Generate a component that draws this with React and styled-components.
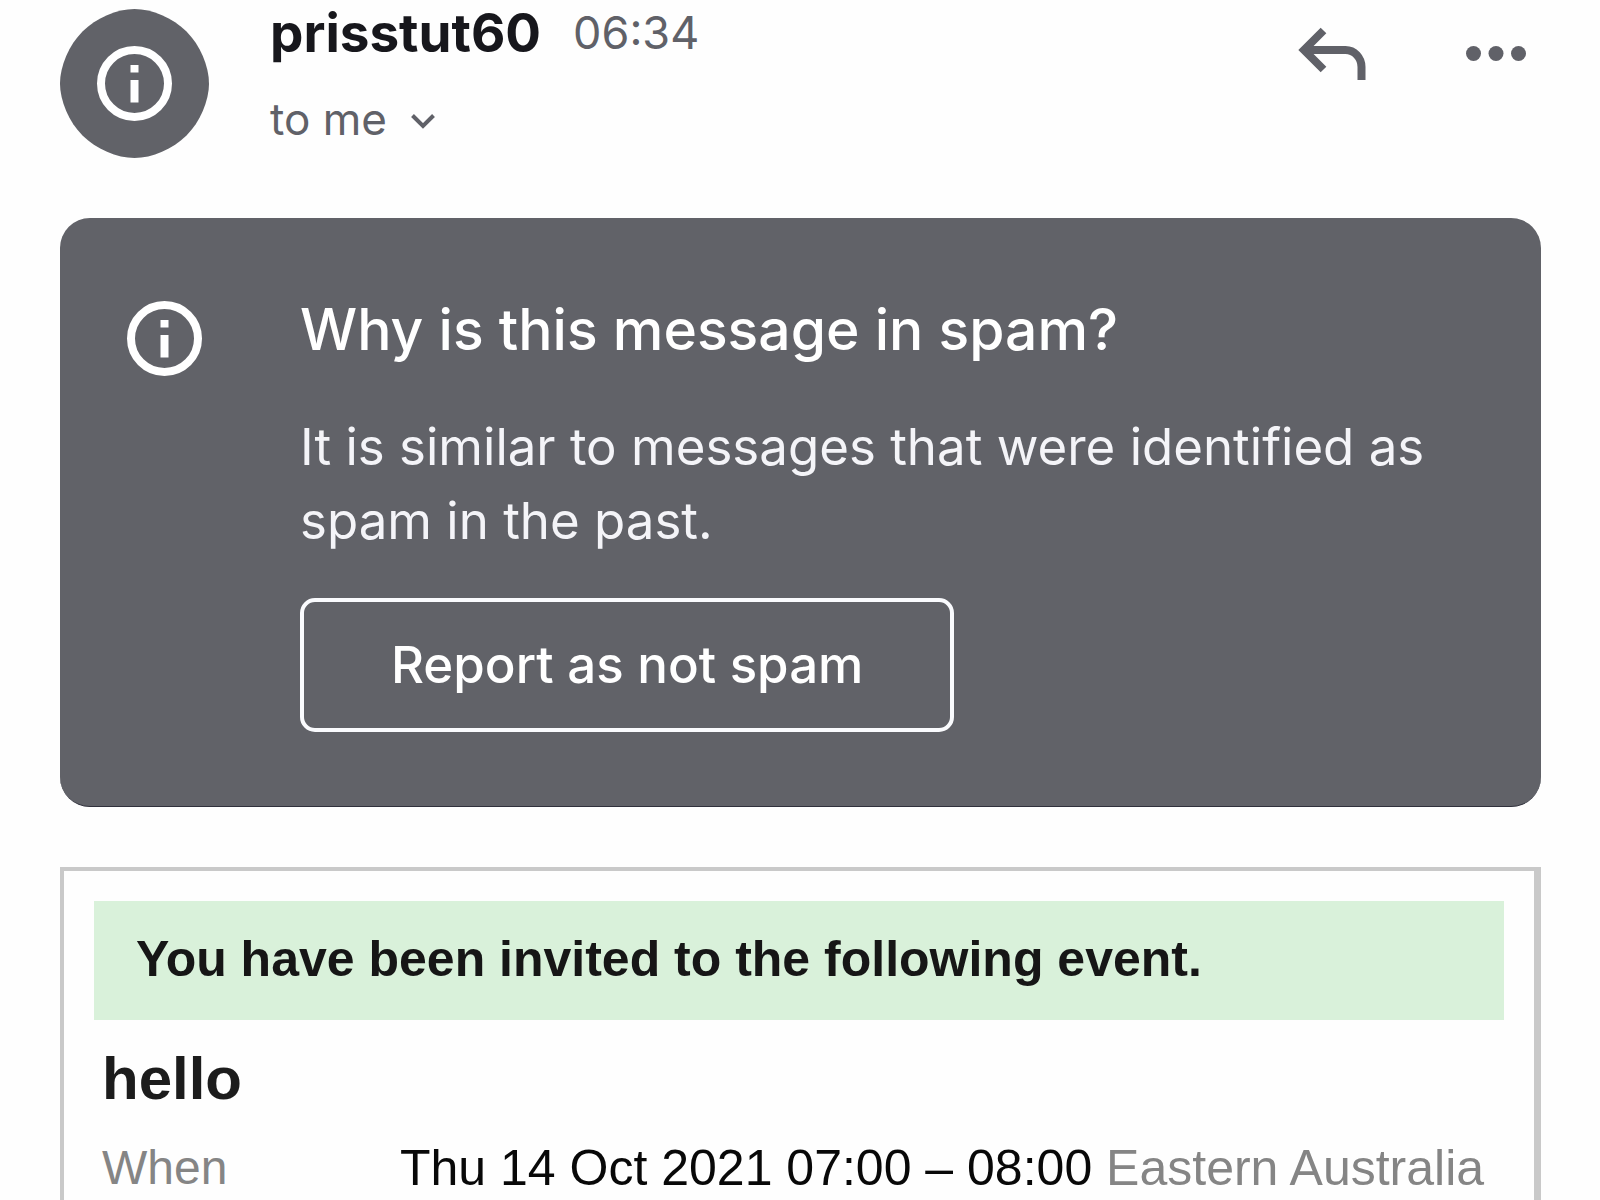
import React from "react";
import styled, { createGlobalStyle } from "styled-components";

const GlobalStyle = createGlobalStyle`
  *, *::before, *::after { box-sizing: border-box; }
  html, body { margin: 0; background: #fefefe; }
  h1, h2, p { margin: 0; }
  button { font: inherit; color: inherit; cursor: pointer; }
`;

const Page = styled.main`
  display: flex;
  flex-direction: column;
  gap: 60px;
  height: 100vh;
  overflow: hidden;
  padding: 9px 59px 0 60px;
  font-family: Inter, "Liberation Sans", sans-serif;
  color: #17171c;
`;

const Header = styled.header`
  display: flex;
  align-items: flex-start;
  flex-shrink: 0;
`;

const Avatar = styled.svg`
  width: 149px;
  height: 149px;
  margin-right: 61px;
  flex-shrink: 0;
`;

const Sender = styled.div`
  display: flex;
  flex-direction: column;
  align-items: flex-start;
  gap: 38px;
  flex: 1;
`;

const SenderLine = styled.div`
  display: flex;
  align-items: center;
  gap: 32px;
  line-height: 48px;
`;

const Name = styled.h1`
  font-size: 53px;
  font-weight: 700;
  line-height: 48px;
`;

const Time = styled.time`
  font-size: 45px;
  color: #606168;
`;

const PlainButton = styled.button`
  display: flex;
  align-items: center;
  gap: 24px;
  padding: 0;
  border: 0;
  background: none;
  color: #606168;
`;

const Recipient = styled(PlainButton)`
  font-size: 44px;
  line-height: 48px;
`;

const Actions = styled.div`
  display: flex;
  gap: 100px;
  padding: 18px 15px 0 0;
`;

const SpamCard = styled.section`
  display: flex;
  align-items: flex-start;
  gap: 98px;
  flex-shrink: 0;
  padding: 76px 67px 74px;
  border-radius: 30px;
  border-bottom: 1px solid #30313c;
  background: #616268;
  color: #fff;
`;

const CardIcon = styled.svg`
  width: 75px;
  height: 75px;
  margin-top: 7px;
  flex-shrink: 0;
`;

const CardBody = styled.div`
  display: flex;
  flex-direction: column;
  align-items: flex-start;
  flex: 1;
`;

const CardTitle = styled.h2`
  margin-bottom: 44px;
  font-size: 57px;
  font-weight: 500;
  line-height: 72px;
`;

const CardText = styled.p`
  margin-bottom: 40px;
  font-size: 51px;
  line-height: 74px;
  color: #f4f4f8;
`;

const ReportButton = styled.button`
  padding: 27px 87px;
  border: 4px solid #fafbfe;
  border-radius: 15px;
  background: none;
  font-size: 51px;
  font-weight: 500;
  line-height: 72px;
`;

const Invite = styled.section`
  flex: 1 0 auto;
  padding: 30px 30px 0;
  border: 4px solid #c9c9c9;
  border-right-width: 7px;
  border-bottom: 0;
  font-family: "Liberation Sans", Arial, sans-serif;
`;

const Banner = styled.p`
  padding: 28px 42px 31px;
  background: #d9f1da;
  color: #161616;
  font-size: 50px;
  font-weight: 700;
  line-height: 60px;
`;

const EventTitle = styled.h2`
  margin: 29px 8px 0;
  color: #1c1c1c;
  font-size: 60px;
  font-weight: 700;
  line-height: 60px;
`;

const Details = styled.table`
  margin: 29px 8px 0;
  border-collapse: collapse;
  font-size: 50px;
  line-height: 60px;
  white-space: nowrap;

  th, td { padding: 0; font-weight: 400; text-align: left; }
  th { width: 298px; color: #858585; font-size: 48px; }
  td { color: #080808; }
`;

const Zone = styled.span`
  color: #858585;
`;

const InfoGlyph = ({ cx, cy }) => (
  <g transform={`translate(${cx} ${cy})`}>
    <circle r="33.5" fill="none" stroke="#fff" strokeWidth="8" />
    <rect x="-4" y="-18.5" width="8" height="7.5" fill="#fff" />
    <rect x="-4" y="-3.5" width="8" height="22.5" fill="#fff" />
  </g>
);

export default function App() {
  return (
    <>
      <GlobalStyle />
      <Page>
        <Header>
          <Avatar viewBox="0 0 149 149" aria-hidden="true">
            <path
              fill="#616268"
              d="M74.500 0C92 0 113 9 126.500 22.500C140 36 149 57 149 74.500C149 92 140 113 126.500 126.500C113 140 92 149 74.500 149C57 149 36 140 22.500 126.500C9 113 0 92 0 74.500C0 57 9 36 22.500 22.500C36 9 57 0 74.500 0Z"
            />
            <InfoGlyph cx={74.5} cy={74.5} />
          </Avatar>
          <Sender>
            <SenderLine>
              <Name>prisstut60</Name>
              <Time dateTime="06:34">06:34</Time>
            </SenderLine>
            <Recipient type="button">
              to me
              <svg width="24" height="20" viewBox="0 0 24 20" aria-hidden="true">
                <path d="M1.500 6.500L12 17L22.500 6.500" fill="none" stroke="currentColor" strokeWidth="4" />
              </svg>
            </Recipient>
          </Sender>
          <Actions>
            <PlainButton type="button" aria-label="Reply">
              <svg width="68" height="54" viewBox="0 0 68 54" aria-hidden="true">
                <path
                  d="M25.500 3.500L6 23L25.500 42.500M7 23H47.500A16 17 0 0 1 63.500 40V53"
                  fill="none"
                  stroke="currentColor"
                  strokeWidth="8"
                />
              </svg>
            </PlainButton>
            <PlainButton type="button" aria-label="More options">
              <svg width="60" height="54" viewBox="0 0 60 54" fill="currentColor" aria-hidden="true">
                <circle cx="7.500" cy="26.500" r="7.500" />
                <circle cx="30" cy="26.500" r="7.500" />
                <circle cx="52.500" cy="26.500" r="7.500" />
              </svg>
            </PlainButton>
          </Actions>
        </Header>

        <SpamCard>
          <CardIcon viewBox="0 0 75 75" aria-hidden="true">
            <InfoGlyph cx={37.5} cy={37.5} />
          </CardIcon>
          <CardBody>
            <CardTitle>Why is this message in spam?</CardTitle>
            <CardText>It is similar to messages that were identified as spam in the past.</CardText>
            <ReportButton type="button">Report as not spam</ReportButton>
          </CardBody>
        </SpamCard>

        <Invite>
          <Banner>You have been invited to the following event.</Banner>
          <EventTitle>hello</EventTitle>
          <Details>
            <tbody>
              <tr>
                <th scope="row">When</th>
                <td>
                  Thu 14 Oct 2021 07:00 – 08:00 <Zone>Eastern Australia</Zone>
                </td>
              </tr>
            </tbody>
          </Details>
        </Invite>
      </Page>
    </>
  );
}
